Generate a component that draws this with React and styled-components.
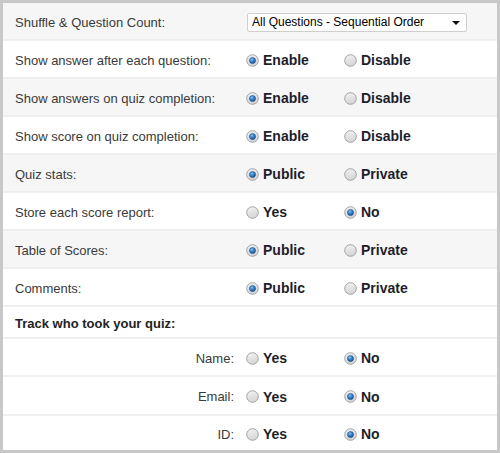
import React from "react";
import styled, { createGlobalStyle } from "styled-components";

const Global = createGlobalStyle`
  html, body { margin: 0; padding: 0; background: #fff; }
  body { font-family: "Liberation Sans", Arial, sans-serif; }
`;

const Frame = styled.div`
  width: 500px;
  height: 453px;
  box-sizing: border-box;
  border: 3px solid #c8c8c8;
  background: #fff;
  display: flex;
  flex-direction: column;
`;

const Row = styled.div`
  display: flex;
  align-items: center;
  box-sizing: border-box;
  height: ${(p) => p.$h || 38}px;
  padding-top: 2px;
  background: ${(p) => (p.$alt ? "#f6f6f6" : "#fff")};
  border-bottom: ${(p) => (p.$last ? "none" : "2px solid #efefef")};
`;

const Label = styled.div`
  box-sizing: border-box;
  width: 243px;
  padding: ${(p) => (p.$right ? "0 12px 0 0" : "0 0 0 12px")};
  text-align: ${(p) => (p.$right ? "right" : "left")};
  font-size: 13px;
  color: #3a3a3a;
`;

const Heading = styled.div`
  padding-left: 12px;
  font-size: 13px;
  font-weight: bold;
  color: #222;
`;

const Options = styled.div`
  display: flex;
  align-items: center;
`;

const Option = styled.label`
  display: flex;
  align-items: center;
  gap: 4px;
  width: 98px;
  font-size: 14px;
  font-weight: bold;
  color: #1e1e2a;
`;

const Select = styled.div`
  position: relative;
  box-sizing: border-box;
  width: 220px;
  height: 19px;
  margin-left: 1px;
  border: 1px solid #cfcfcf;
  border-radius: 2px;
  background: #fff;
  font-size: 12px;
  color: #000;
  line-height: 17px;
  padding-left: 4px;
`;

const Arrow = styled.span`
  position: absolute;
  right: 6px;
  top: 7px;
  width: 0;
  height: 0;
  border-left: 4px solid transparent;
  border-right: 4px solid transparent;
  border-top: 4px solid #111;
`;

let gid = 0;
function Radio({ checked }) {
  const id = React.useMemo(() => `r${gid++}`, []);
  return (
    <svg width="13" height="13" viewBox="0 0 13 13">
      <defs>
        <linearGradient id={`${id}b`} x1="0" y1="0" x2="0.3" y2="1">
          <stop offset="0" stopColor="#f4f4f4" />
          <stop offset="1" stopColor="#d6d6d6" />
        </linearGradient>
        <radialGradient id={`${id}d`} cx="0.4" cy="0.35" r="0.7">
          <stop offset="0" stopColor="#8cc4f2" />
          <stop offset="0.5" stopColor="#2f7cc8" />
          <stop offset="1" stopColor="#174a85" />
        </radialGradient>
      </defs>
      <circle cx="6.5" cy="6.5" r="5.8" fill={`url(#${id}b)`} stroke="#9a9a9a" strokeWidth="0.9" />
      {checked && <circle cx="6.5" cy="6.5" r="3.1" fill={`url(#${id}d)`} stroke="#1d4f86" strokeWidth="0.5" />}
    </svg>
  );
}

function Choice({ opts, sel }) {
  return (
    <Options>
      {opts.map((o, i) => (
        <Option key={o}>
          <Radio checked={i === sel} />
          {o}
        </Option>
      ))}
    </Options>
  );
}

const rows = [
  ["Show answer after each question:", ["Enable", "Disable"], 0],
  ["Show answers on quiz completion:", ["Enable", "Disable"], 0],
  ["Show score on quiz completion:", ["Enable", "Disable"], 0],
  ["Quiz stats:", ["Public", "Private"], 0],
  ["Store each score report:", ["Yes", "No"], 1],
  ["Table of Scores:", ["Public", "Private"], 0],
  ["Comments:", ["Public", "Private"], 0],
];

const track = [
  ["Name:", 38],
  ["Email:", 39],
  ["ID:", 34],
];

export default function App() {
  return (
    <>
      <Global />
      <Frame>
        <Row $alt>
          <Label>Shuffle &amp; Question Count:</Label>
          <Select>
            All Questions - Sequential Order
            <Arrow />
          </Select>
        </Row>
        {rows.map(([l, o, s], i) => (
          <Row key={l} $alt={i % 2 === 1}>
            <Label>{l}</Label>
            <Choice opts={o} sel={s} />
          </Row>
        ))}
        <Row $h={32}>
          <Heading>Track who took your quiz:</Heading>
        </Row>
        {track.map(([l, h], i) => (
          <Row key={l} $h={h} $last={i === track.length - 1}>
            <Label $right>{l}</Label>
            <Choice opts={["Yes", "No"]} sel={1} />
          </Row>
        ))}
      </Frame>
    </>
  );
}
